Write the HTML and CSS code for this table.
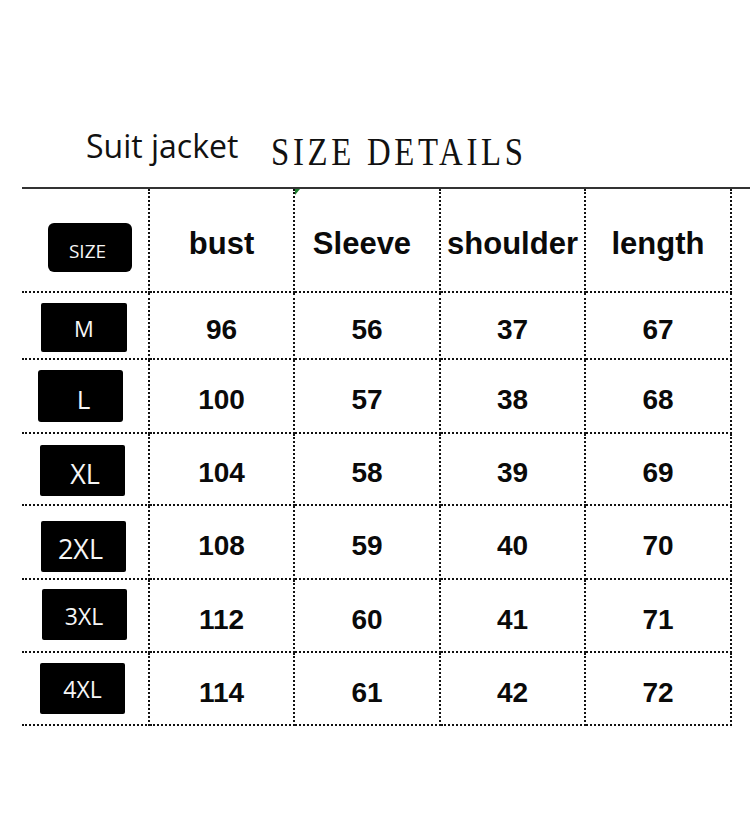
FILE: index.html
```html
<!DOCTYPE html>
<html lang="en">
<head>
<meta charset="utf-8">
<title>Suit jacket size details</title>
<link rel="stylesheet" href="styles.css">
</head>
<body>
<div class="page">
  <header class="title">
    <span class="title-sub">Suit jacket</span>
    <h1 class="title-main">SIZE DETAILS</h1>
  </header>
  <div class="chart">
    <div class="cell cell-size"><span class="badge badge-head">SIZE</span></div>
    <div class="cell head">bust</div>
    <div class="cell head head-sleeve">Sleeve<span class="marker"></span></div>
    <div class="cell head">shoulder</div>
    <div class="cell head">length</div>

    <div class="cell cell-size"><span class="badge badge-m">M</span></div>
    <div class="cell num">96</div>
    <div class="cell num">56</div>
    <div class="cell num">37</div>
    <div class="cell num">67</div>

    <div class="cell cell-size"><span class="badge badge-l">L</span></div>
    <div class="cell num">100</div>
    <div class="cell num">57</div>
    <div class="cell num">38</div>
    <div class="cell num">68</div>

    <div class="cell cell-size"><span class="badge badge-xl">XL</span></div>
    <div class="cell num">104</div>
    <div class="cell num">58</div>
    <div class="cell num">39</div>
    <div class="cell num">69</div>

    <div class="cell cell-size"><span class="badge badge-2xl">2XL</span></div>
    <div class="cell num">108</div>
    <div class="cell num">59</div>
    <div class="cell num">40</div>
    <div class="cell num">70</div>

    <div class="cell cell-size"><span class="badge badge-3xl">3XL</span></div>
    <div class="cell num">112</div>
    <div class="cell num">60</div>
    <div class="cell num">41</div>
    <div class="cell num">71</div>

    <div class="cell cell-size"><span class="badge badge-4xl">4XL</span></div>
    <div class="cell num">114</div>
    <div class="cell num">61</div>
    <div class="cell num">42</div>
    <div class="cell num">72</div>
  </div>
</div>
</body>
</html>
```

FILE: styles.css
```css
* { box-sizing: border-box; }

html, body {
  margin: 0;
  padding: 0;
  background: #ffffff;
}

.page {
  width: 750px;
  height: 823px;
  overflow: hidden;
}

.title {
  margin-left: 22px;
  height: 189px;
  border-bottom: 2px solid #333333;
  display: flex;
  align-items: flex-end;
  padding-left: 64px;
}

.title-sub {
  font-family: "Open Sans", "Liberation Sans", sans-serif;
  font-size: 32px;
  line-height: 32px;
  color: #111111;
  margin-bottom: 25px;
}

.title-main {
  margin: 0 0 15px 33px;
  font-family: "Liberation Serif", "DejaVu Serif", serif;
  font-weight: normal;
  font-size: 40px;
  line-height: 40px;
  letter-spacing: 4.5px;
  white-space: nowrap;
  transform: scaleX(0.82);
  transform-origin: left bottom;
  color: #111111;
}

.chart {
  margin-left: 22px;
  width: 710px;
  display: grid;
  grid-template-columns: 128px 145px 146px 145px 146px;
  grid-template-rows: 104px 67px 74px 72px 74px 73px 73px;
}

.cell {
  border-right: 2px dotted #111111;
  border-bottom: 2px dotted #111111;
  display: flex;
  justify-content: center;
  align-items: center;
  font-family: "Liberation Sans", Arial, sans-serif;
  font-weight: bold;
  color: #0a0a0a;
}

.cell-size {
  justify-content: flex-start;
  align-items: flex-start;
}

.head {
  font-size: 31px;
  padding-top: 8px;
  position: relative;
}

.head-sleeve {
  padding-right: 10px;
}

.marker {
  position: absolute;
  left: 0;
  top: 0;
  width: 0;
  height: 0;
  border-top: 6px solid #1b7d2c;
  border-right: 5px solid transparent;
}

.num {
  font-size: 28px;
  padding-top: 8px;
}

.badge {
  display: flex;
  justify-content: center;
  align-items: center;
  background: #000000;
  color: #f6f6f6;
  font-family: "Open Sans", "Liberation Sans", sans-serif;
  font-weight: normal;
  border-radius: 2px;
  width: 85px;
  height: 51px;
}

.badge-head {
  margin: 34px 0 0 26px;
  width: 84px;
  height: 49px;
  border-radius: 6px;
  font-size: 19px;
  padding: 6px 5px 0 0;
}

.badge-m {
  margin: 10px 0 0 19px;
  width: 86px;
  height: 49px;
  font-size: 22px;
}

.badge-l {
  margin: 10px 0 0 16px;
  height: 52px;
  font-size: 26px;
  padding: 5px 0 0 6px;
  border-radius: 3px;
}

.badge-xl {
  margin: 11px 0 0 18px;
  font-size: 27px;
  padding: 5px 0 0 5px;
}

.badge-2xl {
  margin: 15px 0 0 19px;
  font-size: 27px;
  padding: 4px 6px 0 0;
}

.badge-3xl {
  margin: 9px 0 0 20px;
  font-size: 23px;
  padding: 3px 1px 0 0;
}

.badge-4xl {
  margin: 10px 0 0 18px;
  font-size: 23px;
}
```
